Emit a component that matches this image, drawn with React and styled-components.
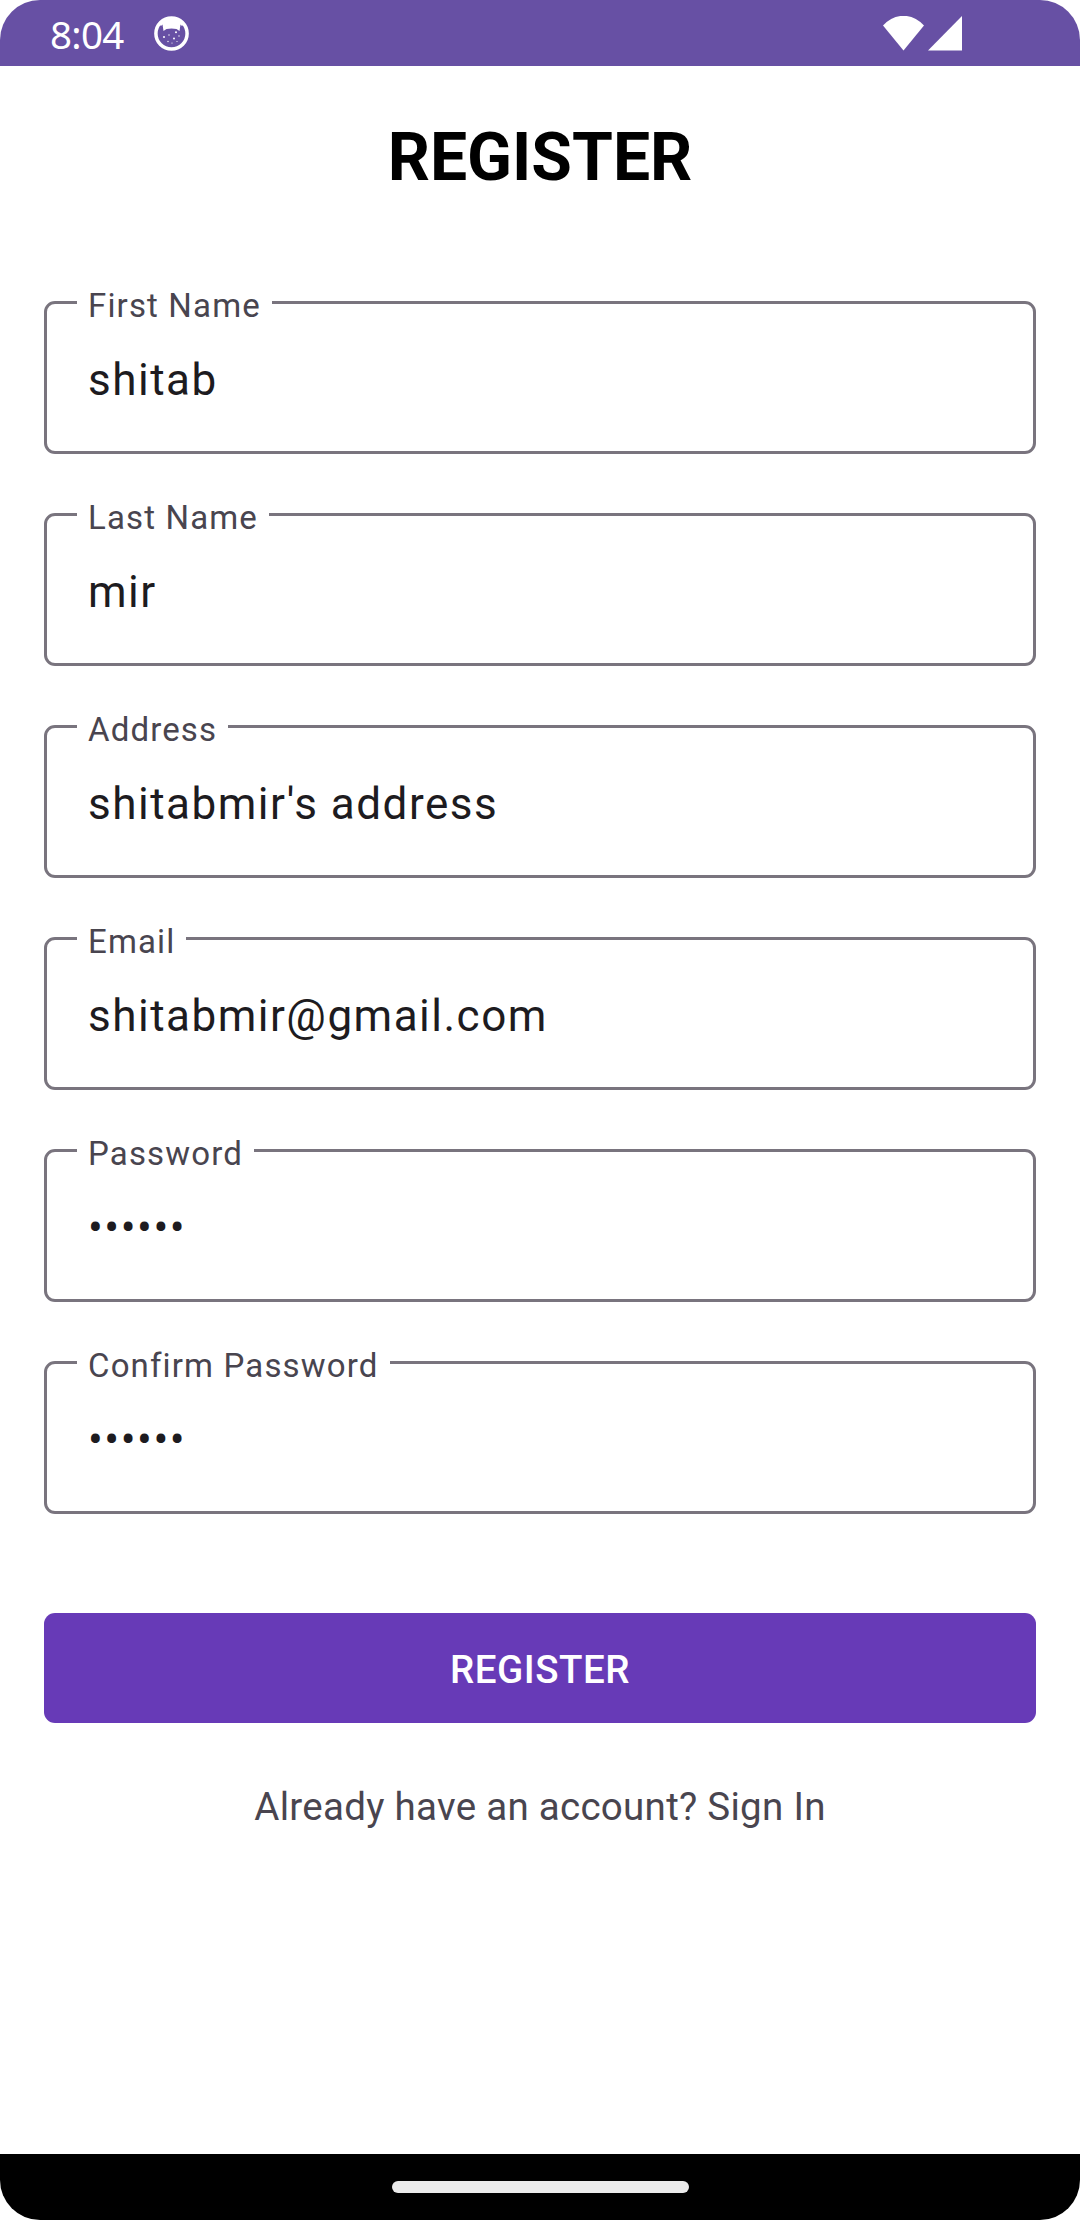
import React from "react";
import styled, { createGlobalStyle } from "styled-components";

const GlobalStyle = createGlobalStyle`
  * { box-sizing: border-box; }
  body { margin: 0; background: #fff; }
`;

const Screen = styled.div`
  width: 1080px;
  height: 2220px;
  display: flex;
  flex-direction: column;
  overflow: hidden;
  border-radius: 40px;
  background: #fff;
  font-family: Roboto, "Liberation Sans", sans-serif;
`;

const StatusBar = styled.header`
  height: 66px;
  flex: none;
  display: flex;
  align-items: center;
  padding: 1px 118px 0 50px;
  background: #6750a4;
  color: #fff;
`;

const Clock = styled.span`
  width: 104px;
  font: 400 38.5px/52px "Noto Sans", sans-serif;
  letter-spacing: -0.7px;
`;

const StatusIcons = styled.div`
  display: flex;
  margin-left: auto;
  gap: 4px;
`;

const Main = styled.main`
  flex: 1;
  display: flex;
  flex-direction: column;
  padding: 53px 44px 0;
`;

const Title = styled.h1`
  margin: 0;
  text-align: center;
  color: #000;
  font-size: 66px;
  font-weight: 700;
  line-height: 78px;
`;

const Fields = styled.form`
  display: flex;
  flex-direction: column;
  gap: 38px;
  margin-top: 83px;
`;

const Field = styled.fieldset`
  height: 174px;
  margin: 0;
  min-width: 0;
  padding: 0 30px;
  border: 3px solid #79747e;
  border-radius: 11px;
`;

const Label = styled.legend`
  height: 45px;
  padding: 6px 11px 0;
  color: #49454f;
  font-size: 33px;
  line-height: 39px;
  letter-spacing: 1.15px;
`;

const Value = styled.div`
  padding: 29px 11px 0;
  color: #1d1b20;
  font-size: 44px;
  line-height: 52px;
  letter-spacing: 1.5px;
`;

const Submit = styled.button`
  height: 110px;
  flex: none;
  margin-top: 99px;
  padding: 3px 0 0;
  border: 0;
  border-radius: 11px;
  background: #673ab7;
  color: #fff;
  font: 500 38.5px/46px Roboto, "Liberation Sans", sans-serif;
  letter-spacing: 0.5px;
`;

const SignIn = styled.p`
  margin: 61px 0 0;
  text-align: center;
  color: #49454f;
  font-size: 38.5px;
  line-height: 46px;
  letter-spacing: 0.28px;
`;

const NavBar = styled.footer`
  height: 66px;
  flex: none;
  display: flex;
  justify-content: center;
  padding-top: 27px;
  background: #000;
`;

const Handle = styled.div`
  width: 297px;
  height: 12px;
  border-radius: 6px;
  background: #ebebeb;
`;

const FIELDS = [
  ["First Name", "shitab"],
  ["Last Name", "mir"],
  ["Address", "shitabmir's address"],
  ["Email", "shitabmir@gmail.com"],
  ["Password", "••••••"],
  ["Confirm Password", "••••••"],
];

function CatIcon() {
  return (
    <svg width="36" height="36" viewBox="0 0 36 36">
      <circle cx="17.5" cy="17.5" r="15.6" fill="none" stroke="#fff" strokeWidth="3.5" />
      <path d="M5 8 Q10 2 17.5 2 Q25 2 30 8 L28 10 L26.5 8.5 L25.5 15 L22.5 13 Q17.5 12 12.5 13 L9.5 15 L8.5 8.5 L7 10Z" fill="#fff" />
      <g fill="#fff">
        <circle cx="10" cy="21" r="1" />
        <circle cx="15" cy="19" r=".7" />
        <circle cx="22" cy="16.3" r="1" />
        <circle cx="20" cy="22.5" r="1" />
        <circle cx="25" cy="20" r=".7" />
        <circle cx="14" cy="25.5" r=".7" />
        <circle cx="23" cy="25.5" r=".6" />
        <circle cx="18" cy="27" r=".6" />
      </g>
    </svg>
  );
}

export default function App() {
  return (
    <>
      <GlobalStyle />
      <Screen>
        <StatusBar>
          <Clock>8:04</Clock>
          <CatIcon />
          <StatusIcons>
            <svg width="41" height="36" viewBox="0 0 41 36">
              <path d="M0 9.5 Q9 -0.2 20.5 -0.2 Q32 -0.2 41 9.5 L20.5 34.5Z" fill="#fff" />
            </svg>
            <svg width="34" height="36" viewBox="0 0 34 36">
              <path d="M34 0V34.5H0Z" fill="#fff" />
            </svg>
          </StatusIcons>
        </StatusBar>
        <Main>
          <Title>REGISTER</Title>
          <Fields>
            {FIELDS.map(([label, value]) => (
              <Field key={label}>
                <Label>{label}</Label>
                <Value>{value}</Value>
              </Field>
            ))}
          </Fields>
          <Submit>REGISTER</Submit>
          <SignIn>Already have an account? Sign In</SignIn>
        </Main>
        <NavBar>
          <Handle />
        </NavBar>
      </Screen>
    </>
  );
}
